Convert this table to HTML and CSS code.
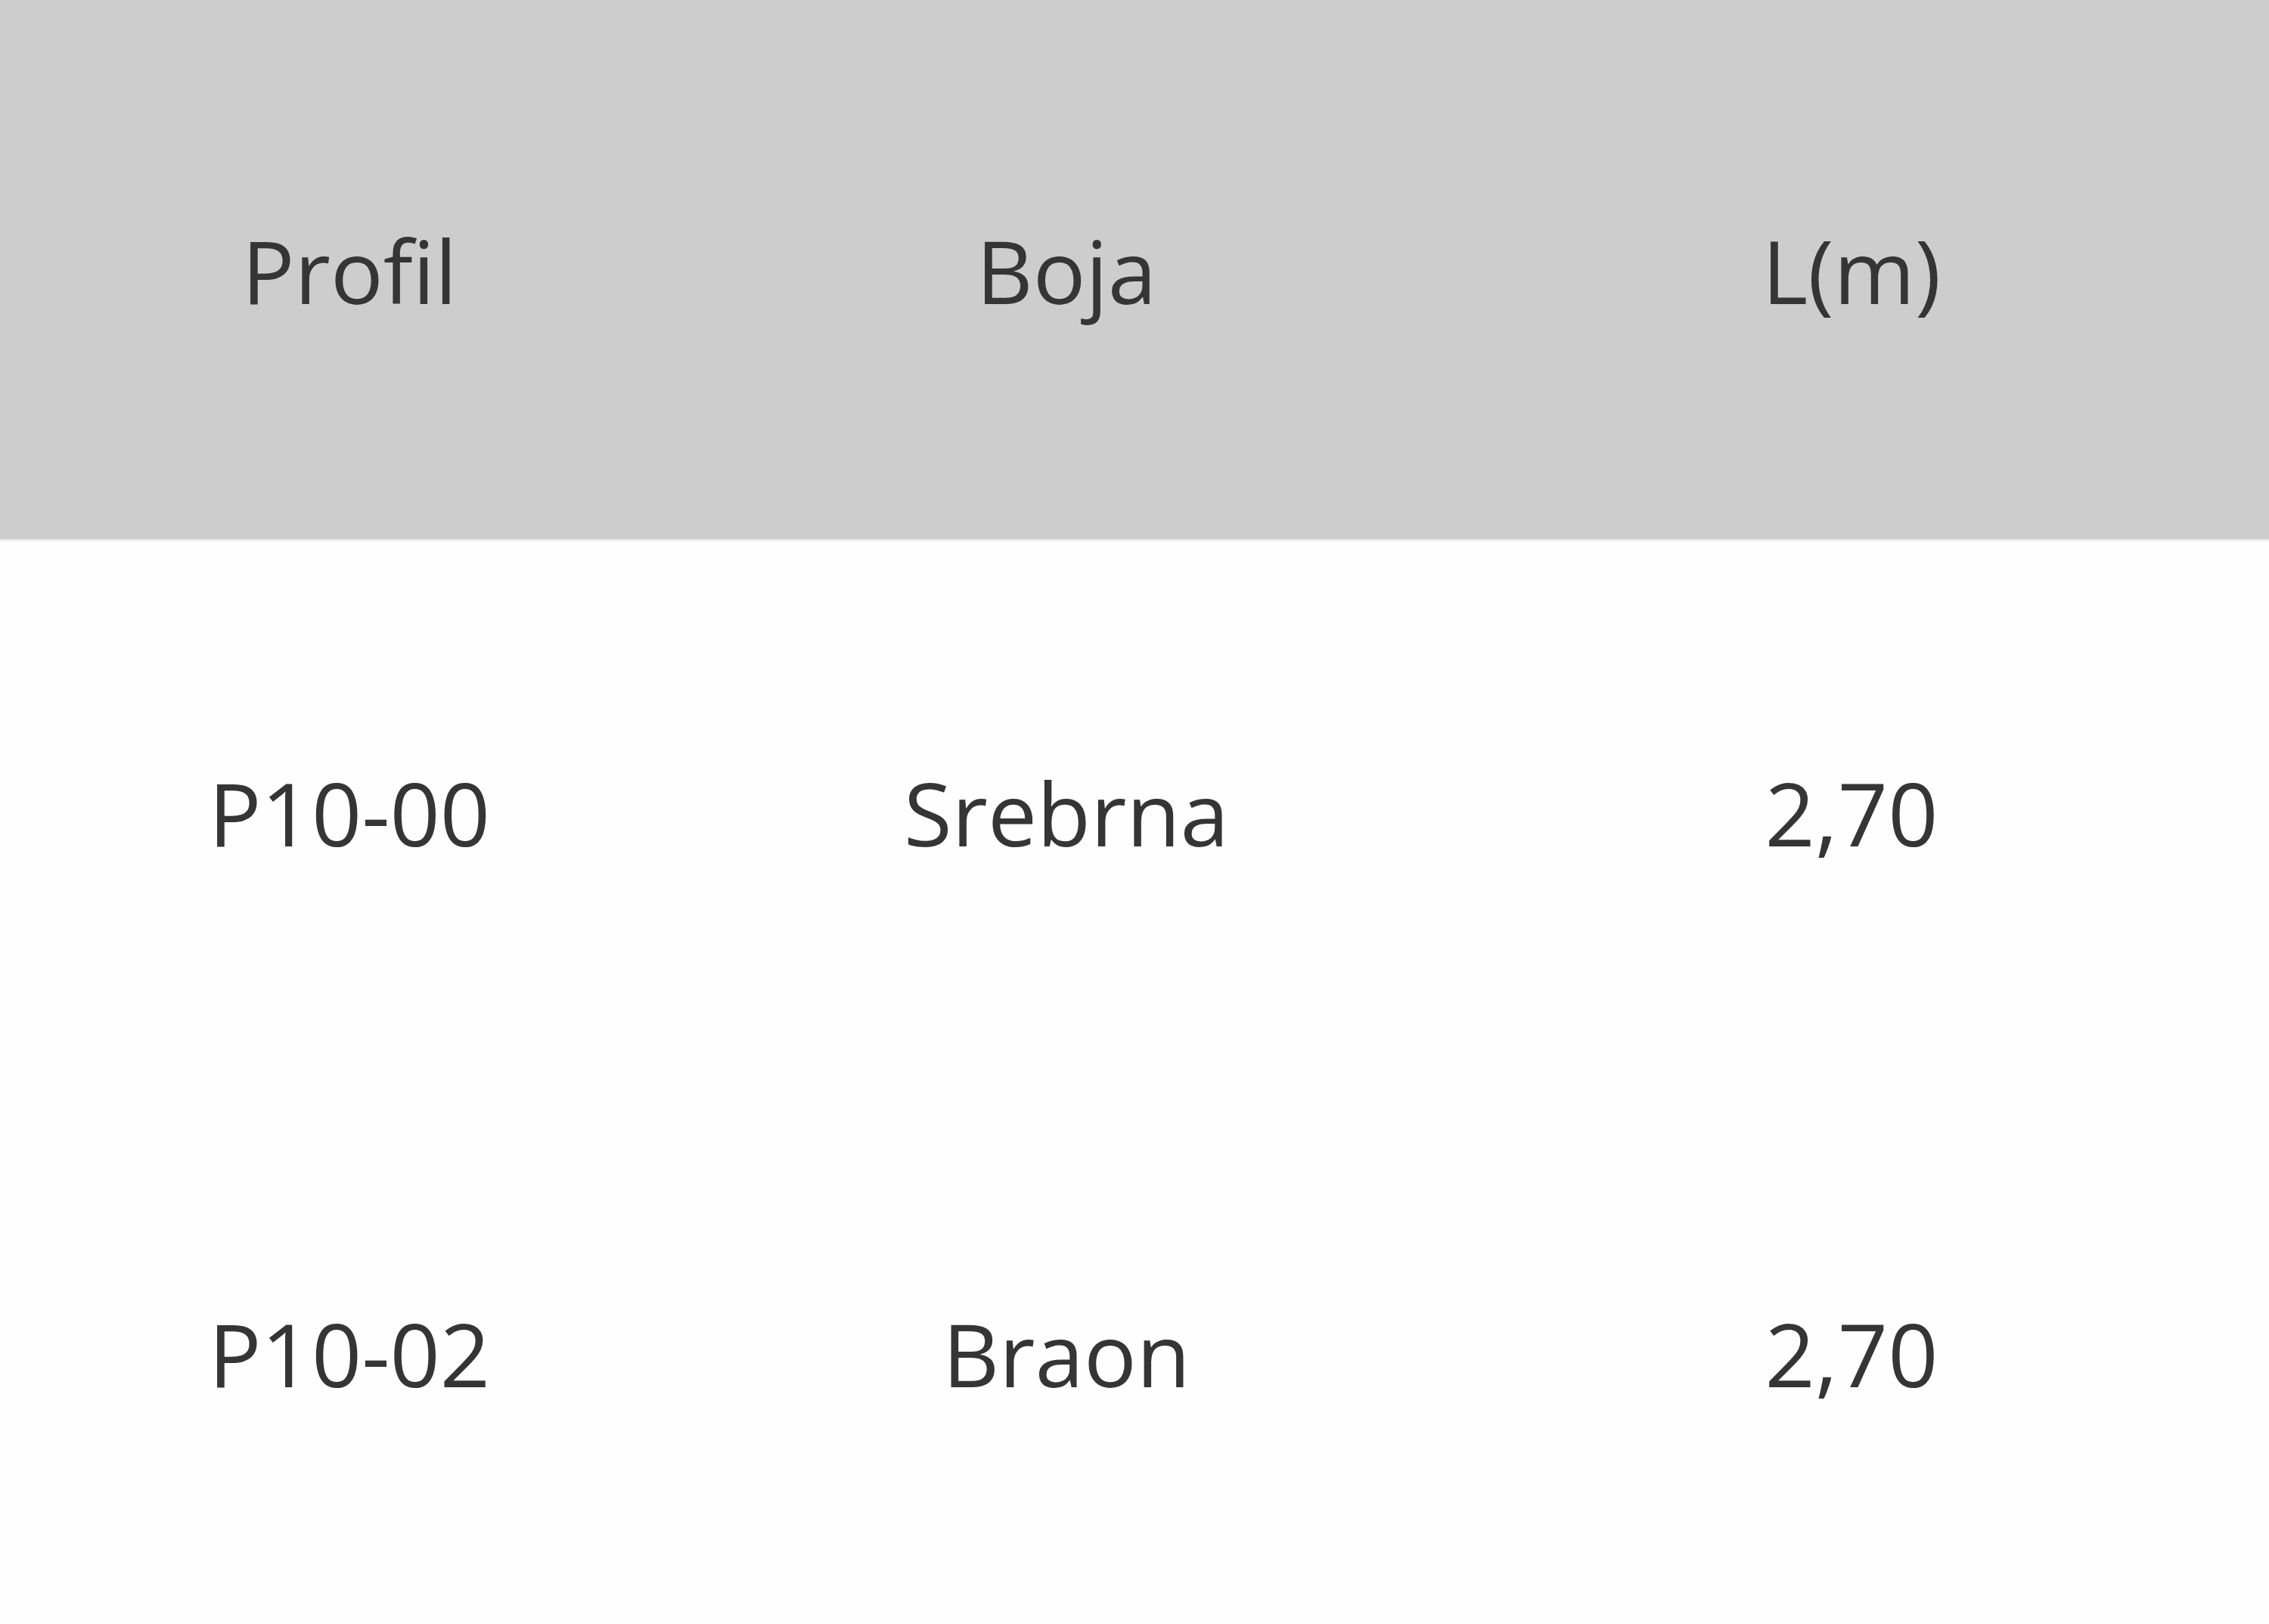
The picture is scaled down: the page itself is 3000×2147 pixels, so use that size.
FILE: index.html
```html
<!DOCTYPE html>
<html lang="sr">
<head>
<meta charset="utf-8">
<title>Profili</title>
<link rel="stylesheet" href="styles.css">
</head>
<body>
<div class="table">
  <div class="row head">
    <div class="cell">Profil</div>
    <div class="cell">Boja</div>
    <div class="cell">L(m)</div>
  </div>
  <div class="row">
    <div class="cell">P10-00</div>
    <div class="cell">Srebrna</div>
    <div class="cell">2,70</div>
  </div>
  <div class="row">
    <div class="cell">P10-02</div>
    <div class="cell">Braon</div>
    <div class="cell">2,70</div>
  </div>
</div>
</body>
</html>
```
FILE: styles.css
```css
html, body {
  margin: 0;
  padding: 0;
  background: #fefefe;
}
body {
  font-family: "Open Sans", "Noto Sans", sans-serif;
  color: #353535;
  width: 3000px;
  height: 2147px;
  overflow: hidden;
}
.table {
  display: flex;
  flex-direction: column;
}
.row {
  display: grid;
  grid-template-columns: 924px 972px 1104px;
  height: 715px;
  align-items: center;
}
.row.head {
  height: 713px;
  background: #cdcdcd;
  border-bottom: 3px solid #f2f2f2;
}
.cell {
  text-align: center;
  font-size: 116px;
  line-height: 1;
  font-variant-ligatures: none;
  font-feature-settings: "liga" 0, "clig" 0, "dlig" 0;
}
```
